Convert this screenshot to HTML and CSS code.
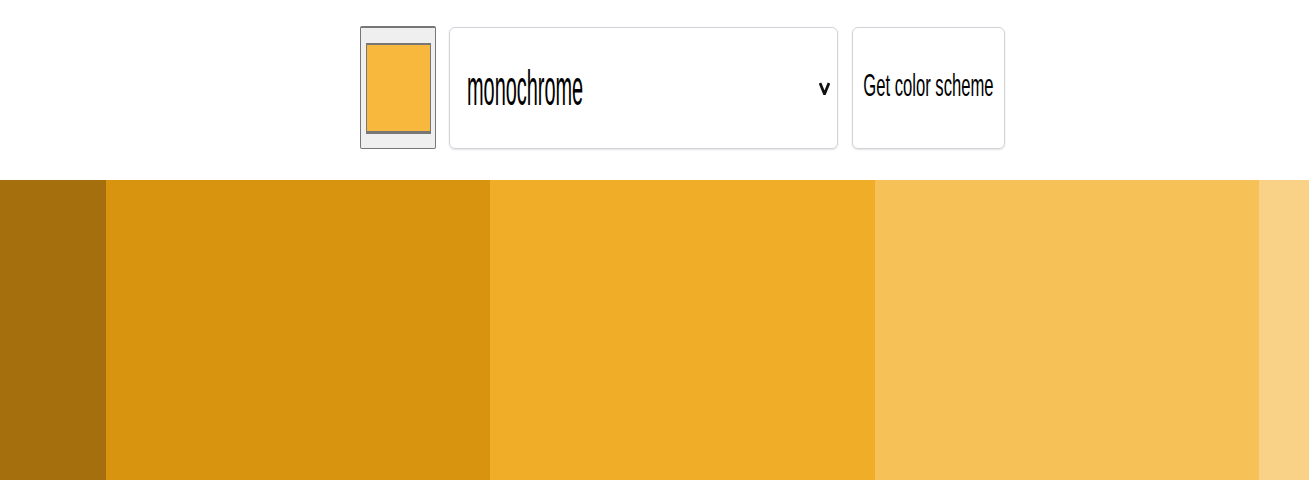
FILE: index.html
```html
<!DOCTYPE html>
<html lang="en">
<head>
<meta charset="utf-8">
<title>Color scheme</title>
<link rel="stylesheet" href="styles.css">
</head>
<body>
<div class="page">
  <div class="controls">
    <div class="color-input"><div class="color-swatch"></div></div>
    <div class="select">
      <span class="select-text">monochrome</span>
      <svg class="chevron" width="11" height="13" viewBox="0 0 11 13"><polyline points="1,1 5.5,12 10,1" fill="none" stroke="#111" stroke-width="2.8" stroke-linejoin="miter"/></svg>
    </div>
    <div class="button"><span class="button-text">Get color scheme</span></div>
  </div>
  <div class="stripes">
    <div class="stripe s1"></div>
    <div class="stripe s2"></div>
    <div class="stripe s3"></div>
    <div class="stripe s4"></div>
    <div class="stripe s5"></div>
  </div>
</div>
</body>
</html>
```

FILE: styles.css
```css
html, body {
  margin: 0;
  padding: 0;
  background: #fff;
  overflow: hidden;
}
body {
  font-family: "Liberation Sans", Arial, sans-serif;
  color: #000;
}
.page {
  box-sizing: border-box;
  width: 100%;
  height: 480px;
  padding-left: 56px;
  overflow: hidden;
}
.controls {
  display: flex;
  justify-content: center;
  align-items: flex-start;
  padding-top: 26px;
}
.color-input {
  box-sizing: border-box;
  width: 76px;
  height: 123px;
  background: #efefef;
  border: 1px solid #767676;
  border-top-width: 2px;
  border-radius: 2px;
  padding: 15px 4px 14px 5px;
  margin-right: 13px;
}
.color-swatch {
  box-sizing: border-box;
  width: 100%;
  height: 100%;
  background: #f7b83d;
  border: 1px solid #777;
  border-top-width: 2px;
  border-bottom-width: 3px;
}
.select {
  box-sizing: border-box;
  width: 389px;
  height: 122px;
  margin-top: 1px;
  border: 1px solid #d1d3d9;
  border-radius: 6px;
  box-shadow: 0 1px 2px rgba(0, 0, 0, 0.12);
  display: flex;
  align-items: center;
  justify-content: space-between;
  padding: 0 7px 0 17px;
  margin-right: 14px;
  overflow: hidden;
}
.select-text {
  display: inline-block;
  font-size: 50px;
  line-height: 50px;
  white-space: nowrap;
  transform: scaleX(0.398);
  transform-origin: left center;
  width: 120px;
}
.chevron {
  flex: none;
}
.button {
  box-sizing: border-box;
  width: 153px;
  height: 122px;
  margin-top: 1px;
  border: 1px solid #d1d3d9;
  border-radius: 6px;
  box-shadow: 0 1px 2px rgba(0, 0, 0, 0.12);
  display: flex;
  align-items: center;
  justify-content: center;
  padding-bottom: 7px;
  overflow: visible;
}
.button-text {
  display: inline-block;
  flex: none;
  font-size: 32px;
  line-height: 32px;
  white-space: nowrap;
  transform: scaleX(0.52);
  transform-origin: center center;
}
.stripes {
  display: flex;
  justify-content: center;
  margin-top: 31px;
  height: 300px;
}
.stripe {
  flex: 0 0 384.4px;
}
.s1 { background: #a56f0e; }
.s2 { background: #d8930f; }
.s3 { background: #f0ae28; }
.s4 { background: #f6c157; }
.s5 { background: #f9d187; }
```
